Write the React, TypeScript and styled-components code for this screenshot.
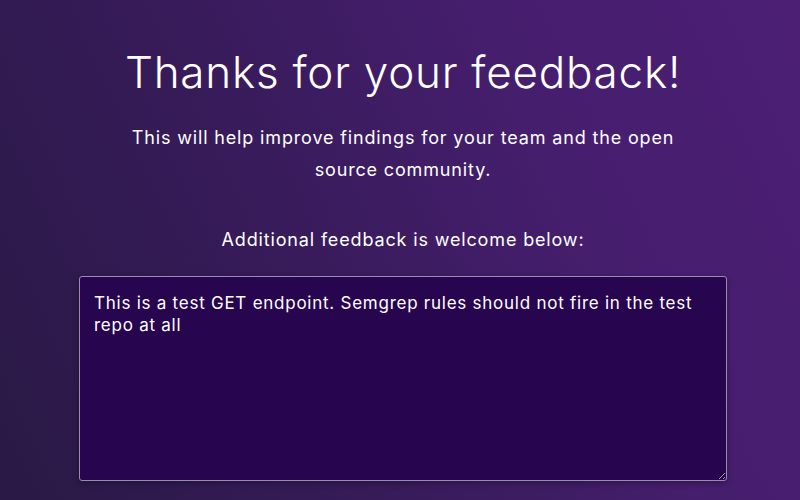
import React from "react";
import styled, { createGlobalStyle } from "styled-components";

const Global = createGlobalStyle`
  html, body { margin: 0; padding: 0; }
  body {
    font-family: Inter, "Noto Sans", sans-serif;
    background: #3a1b5e;
  }
`;

const Page = styled.main`
  width: 800px;
  height: 500px;
  overflow: hidden;
  box-sizing: border-box;
  background: linear-gradient(65deg, #291945 0%, #361b58 35%, #461e6e 70%, #4c1f75 100%);
  display: flex;
  flex-direction: column;
  align-items: center;
  padding: 42px 0 0 6px;
  color: #ffffff;
`;

const Title = styled.h1`
  margin: 0;
  font-size: 44px;
  font-weight: 300;
  line-height: 60px;
  letter-spacing: 0.75px;
`;

const Lead = styled.p`
  margin: 20px 0 0;
  width: 580px;
  text-align: center;
  font-size: 18px;
  font-weight: 400;
  line-height: 32px;
  letter-spacing: 0.85px;
`;

const Prompt = styled.p`
  margin: 38px 0 0;
  font-size: 18px;
  font-weight: 400;
  line-height: 32px;
  letter-spacing: 0.85px;
`;

const Feedback = styled.textarea`
  margin-top: 20px;
  width: 648px;
  height: 205px;
  box-sizing: border-box;
  padding: 15px 14px;
  background: #27054f;
  color: #ffffff;
  border: 1px solid #9a8cb0;
  border-radius: 3px;
  font-family: Inter, "Noto Sans", sans-serif;
  font-size: 17px;
  line-height: 22px;
  letter-spacing: 0.75px;
  box-shadow: 0 2px 6px rgba(0, 0, 0, 0.3);
  outline: none;
  resize: vertical;
`;

export default function App() {
  return (
    <>
      <Global />
      <Page>
        <Title>Thanks for your feedback!</Title>
        <Lead>
          This will help improve findings for your team and the open source
          community.
        </Lead>
        <Prompt>Additional feedback is welcome below:</Prompt>
        <Feedback
          defaultValue="This is a test GET endpoint. Semgrep rules should not fire in the test repo at all"
        />
      </Page>
    </>
  );
}
